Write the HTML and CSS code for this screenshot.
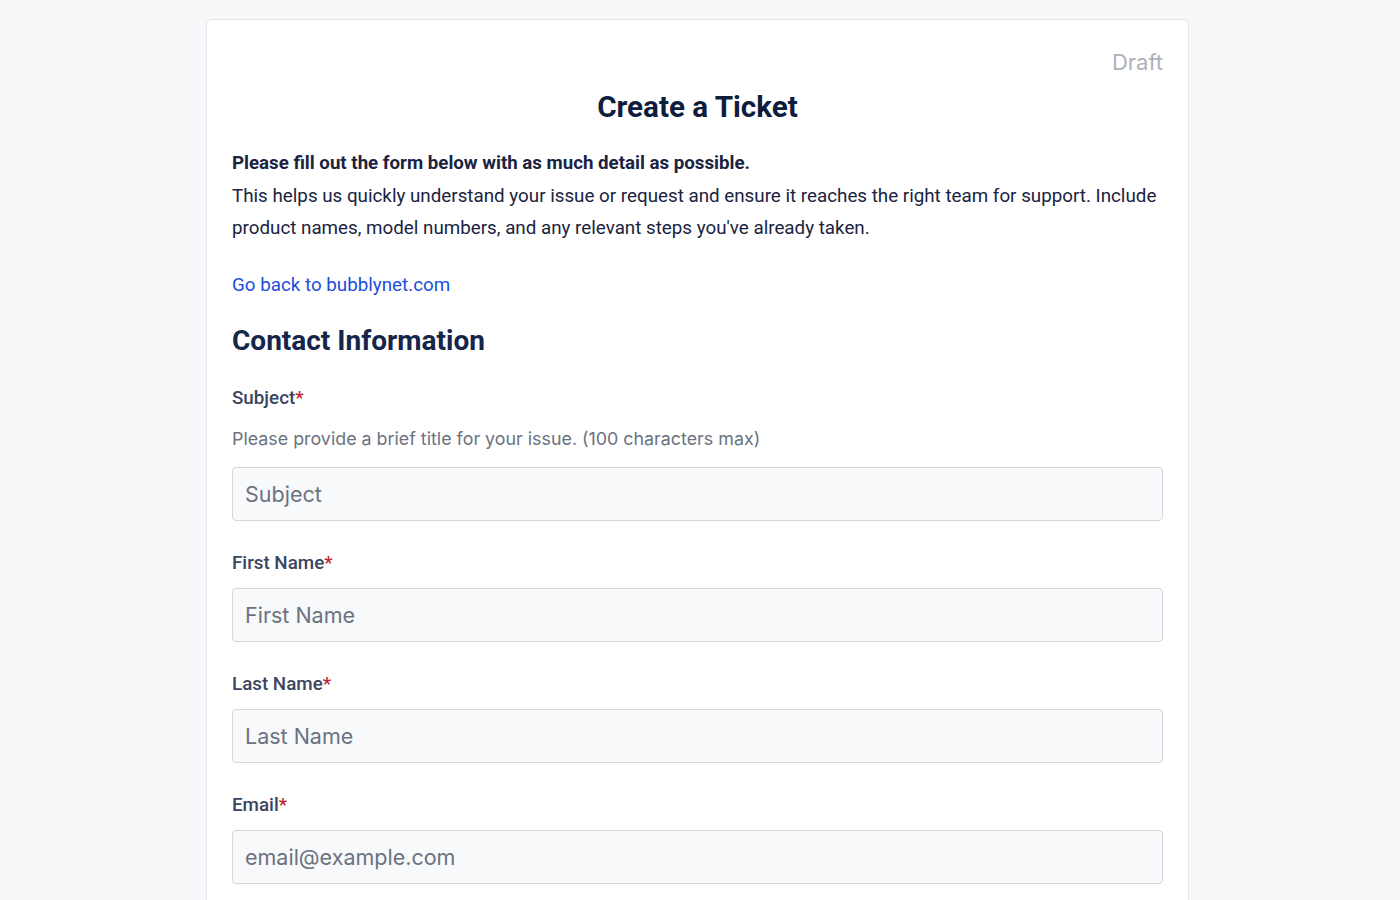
FILE: index.html
```html
<!DOCTYPE html>
<html lang="en">
<head>
<meta charset="utf-8">
<title>Create a Ticket</title>
<link rel="stylesheet" href="styles.css">
</head>
<body>
<div class="page">
  <main class="card">
    <div class="status">Draft</div>
    <h1 class="title">Create a Ticket</h1>
    <p class="intro-strong">Please fill out the form below with as much detail as possible.</p>
    <p class="intro">This helps us quickly understand your issue or request and ensure it reaches the right team for support. Include product names, model numbers, and any relevant steps you've already taken.</p>
    <a class="back-link" href="#">Go back to bubblynet.com</a>
    <h2 class="section-title">Contact Information</h2>
    <form class="form">
      <div class="field">
        <label class="label" for="subject">Subject<span class="req">*</span></label>
        <p class="help">Please provide a brief title for your issue. (100 characters max)</p>
        <input class="input" id="subject" type="text" placeholder="Subject">
      </div>
      <div class="field">
        <label class="label" for="first">First Name<span class="req">*</span></label>
        <input class="input" id="first" type="text" placeholder="First Name">
      </div>
      <div class="field">
        <label class="label" for="last">Last Name<span class="req">*</span></label>
        <input class="input" id="last" type="text" placeholder="Last Name">
      </div>
      <div class="field">
        <label class="label" for="email">Email<span class="req">*</span></label>
        <input class="input" id="email" type="email" placeholder="email@example.com">
      </div>
    </form>
  </main>
</div>
</body>
</html>
```

FILE: styles.css
```css
* { box-sizing: border-box; }
html, body { margin: 0; padding: 0; }
body {
  background: #f7f8fa;
  font-family: Roboto, "Liberation Sans", Arial, sans-serif;
  color: #1a2340;
}
.page {
  padding: 19px 5px 40px 0;
}
.card {
  width: 983px;
  margin: 0 auto;
  background: #ffffff;
  border: 1px solid #e4e6eb;
  border-radius: 6px;
  padding: 26px 25px 40px;
}
.status {
  text-align: right;
  font-family: Inter, "Noto Sans", sans-serif;
  font-size: 22px;
  color: #adb1ba;
  line-height: 32px;
}
.title {
  margin: 12px 0 0;
  text-align: center;
  font-size: 29.6px;
  font-weight: 700;
  color: #0f1d3d;
  line-height: 34px;
}
.intro-strong {
  margin: 23px 0 0;
  font-size: 18.7px;
  font-weight: 700;
  line-height: 32px;
  color: #1a2340;
}
.intro {
  margin: 1px 0 0;
  font-size: 18.8px;
  line-height: 32px;
  color: #1a2340;
}
.back-link {
  display: inline-block;
  margin-top: 25px;
  font-size: 18.8px;
  line-height: 32px;
  color: #1d4ed8;
  text-decoration: none;
}
.section-title {
  margin: 23px 0 0;
  font-size: 28px;
  font-weight: 700;
  color: #16254a;
  line-height: 34px;
}
.form {
  display: flex;
  flex-direction: column;
  gap: 30px;
  margin-top: 28px;
}
.field {
  display: flex;
  flex-direction: column;
}
.label {
  font-size: 18.8px;
  font-weight: 500;
  color: #3a4560;
  line-height: 24px;
  margin-bottom: 13px;
}
.req { color: #c0262d; }
.help {
  margin: 4px 0 16px;
  font-family: Inter, "Noto Sans", sans-serif;
  font-size: 17.85px;
  line-height: 24px;
  color: #6b7280;
}
.input {
  width: 100%;
  height: 54px;
  padding: 0 12px;
  background: #f8f9fb;
  border: 1px solid #d3d6dc;
  border-radius: 4px;
  font-family: Inter, "Noto Sans", sans-serif;
  font-size: 21.5px;
  color: #1a2340;
  outline: none;
}
.input::placeholder { color: #6b7280; }
```
